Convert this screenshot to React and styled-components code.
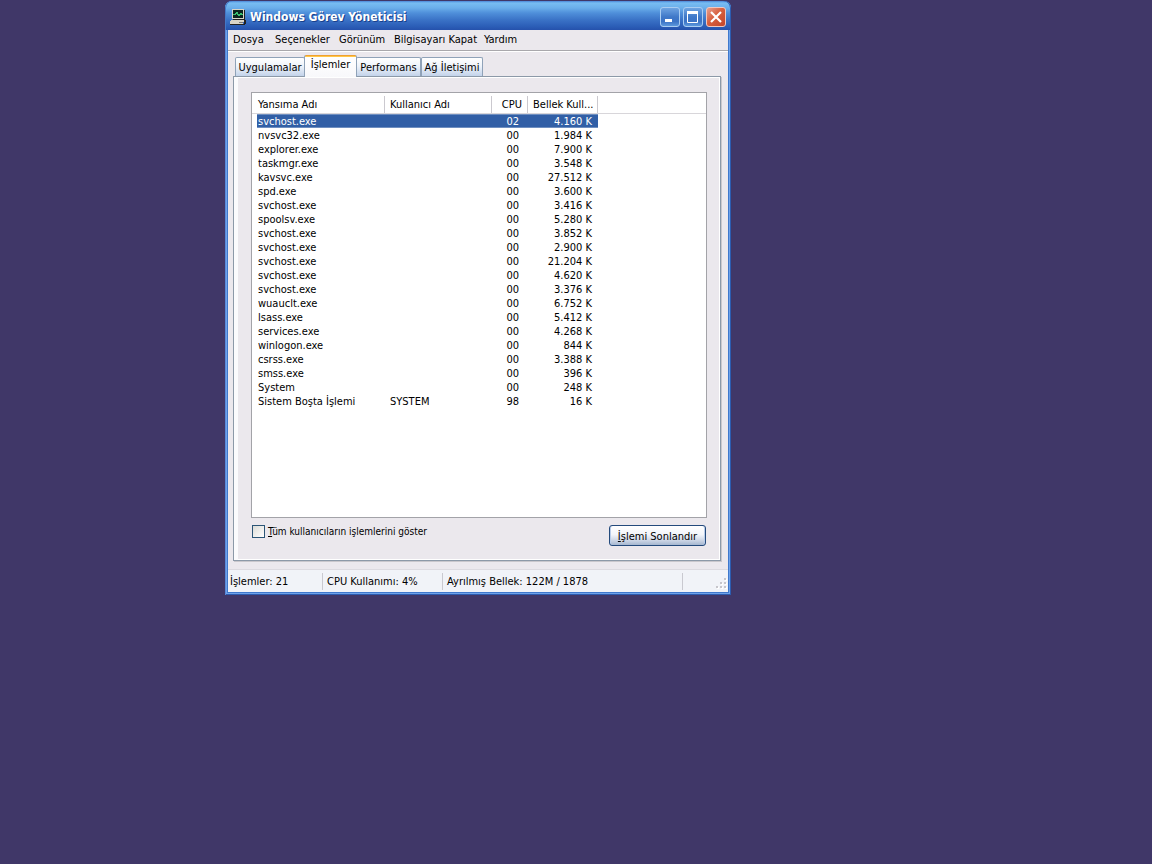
import React from "react";
import styled, { createGlobalStyle, css } from "styled-components";

const GlobalStyle = createGlobalStyle`
  * { box-sizing: border-box; }
  body {
    margin: 0;
    background: #403768;
    color: #000;
    font: 11px/14px "DejaVu Sans Condensed", sans-serif;
  }
  button, input { font: inherit; color: inherit; margin: 0; }
`;

const Desktop = styled.main`
  min-height: 100vh;
  padding: 1px 0 0 225px;
`;

const Window = styled.section`
  width: 100%;
  max-width: 506px;
  padding: 0 3px 3px;
  border-radius: 7px 7px 0 0;
  background: #3f78cc;
  box-shadow: inset 1px 0 #5a8ad8, inset -1px -1px #2c5cb0, inset 2px 0 #6ea2ea, inset -2px -2px #6ea2ea;
`;

const TitleBar = styled.header`
  display: flex;
  align-items: center;
  gap: 4px;
  height: 29px;
  margin: 0 -3px;
  padding: 2px 5px 0;
  border-radius: 7px 7px 0 0;
  background: linear-gradient(#4a86d8 0, #78bdf2 2px, #6aaeea 7px, #4f8fda 12px, #3a72c6 19px, #2c5fb8 25px, #2551ac 29px);
  box-shadow: inset 1px 0 #4478c6, inset -1px 0 #2c5cb0;
`;

const Title = styled.h1`
  flex: 1;
  margin: 0;
  color: #fff;
  font: bold 12px/16px "DejaVu Sans Condensed", sans-serif;
  text-shadow: 1px 1px #17408c;
`;

const Controls = styled.div`
  display: flex;
  gap: 3px;
`;

const ControlButton = styled.button`
  display: flex;
  width: 20px;
  height: 20px;
  padding: 0;
  border: 1px solid #a9cdf2;
  border-radius: 3px;
  background: ${({ $close }) =>
    $close
      ? "linear-gradient(135deg, #e6a090, #d8603f 45%, #c2452a)"
      : "linear-gradient(#6ea4e2, #3f78c8 50%, #3c74c6 75%, #5c98dc)"};
  ${({ $close }) => $close && css`border-color: #f0c8c0;`}
`;

const Client = styled.div`
  background: #ebe8ed;
`;

const MenuBar = styled.nav`
  display: flex;
  height: 21px;
  padding-left: 5px;
  border-bottom: 1px solid #a9a8ac;
  box-shadow: 0 1px #fff;
`;

const MenuItem = styled.button`
  width: ${({ $width }) => $width}px;
  padding: 0 0 1px;
  border: 0;
  background: none;
  text-align: left;
  white-space: nowrap;
`;

const Content = styled.div`
  padding: 4px 7px 8px 5px;
`;

const TabList = styled.div`
  display: flex;
  align-items: flex-end;
  height: 21px;
  padding-left: 2px;
`;

const Tab = styled.button`
  width: ${({ $width }) => $width}px;
  height: 19px;
  padding: 1px 0 0;
  border: 1px solid #8fa2b8;
  border-bottom: 0;
  border-radius: 2px 2px 0 0;
  background: linear-gradient(#fff, #eef3fa 45%, #c3d3ea);
  text-align: center;
  white-space: nowrap;
  ${({ $selected }) =>
    $selected &&
    css`
      position: relative;
      height: 22px;
      margin: 0 -1px -1px;
      padding: 0 0 2px;
      border-top: 0;
      background: linear-gradient(#f0a030 1px, #ffc848 1px 2px, #fff 2px, #f8f8fb);
    `}
`;

const Panel = styled.div`
  padding: 15px 13px 14px 17px;
  border: 1px solid #8c99a8;
  box-shadow: inset 4px 0 #fbfbfd, inset -1px -1px #fff, inset 0 1px #fff, 1px 1px #c9c7cc;
`;

const ListBox = styled.div`
  min-height: 426px;
  border: 1px solid #a3a3a8;
  background: #fff;
`;

const Table = styled.table`
  width: 100%;
  table-layout: fixed;
  border-collapse: separate;
  border-spacing: 0;
  line-height: 13px;
`;

const Column = styled.col`
  width: ${({ $width }) => ($width ? `${$width}px` : "auto")};
`;

const HeaderCell = styled.th`
  height: 21px;
  padding: 3px 6px 0;
  padding-left: ${({ $first }) => ($first ? 6 : 5)}px;
  border-bottom: 1px solid #d8d6da;
  background: linear-gradient(#cbc9cf, #cbc9cf) right 3px / 1px 17px no-repeat;
  font-weight: normal;
  text-align: ${({ $right }) => ($right ? "right" : "left")};
  white-space: nowrap;
  &:last-child { background: none; }
`;

const Row = styled.tr`
  ${({ $selected }) =>
    $selected &&
    css`
      color: #fff;
      td:not(:last-child) {
        background: #315fa6;
        background-clip: padding-box;
        box-shadow: inset 0 1px #6f8fc0, inset 0 -1px #6f8fc0;
      }
    `}
`;

const Cell = styled.td`
  height: 14px;
  padding: 1px ${({ $inset }) => $inset || 6}px 0 5px;
  text-align: ${({ $right }) => ($right ? "right" : "left")};
  white-space: nowrap;
  &:first-child {
    padding-left: 1px;
    border-left: 5px solid #fff;
  }
`;

const Actions = styled.div`
  display: flex;
  align-items: flex-start;
  justify-content: space-between;
  padding: 7px 1px 0;
`;

const CheckLabel = styled.label`
  display: flex;
  align-items: flex-start;
  gap: 3px;
  font-size: 10px;
`;

const Checkbox = styled.input`
  appearance: none;
  width: 13px;
  height: 13px;
  border: 1px solid #2b5576;
  background: linear-gradient(135deg, #dcdcd7, #fff);
`;

const PushButton = styled.button`
  width: 97px;
  height: 21px;
  padding: 2px 0 0;
  border: 1px solid #244a7c;
  border-radius: 3px;
  background: linear-gradient(#fff, #f3f5fa 45%, #cdd6e6 75%, #a6b7d0);
  box-shadow: inset 1px 0 #b9cdea, inset -1px 0 #b9cdea;
  white-space: nowrap;
`;

const StatusBar = styled.footer`
  display: grid;
  grid-template-columns: 95px 120px 240px 1fr;
  height: 23px;
  padding: 3px 0 2px;
  border-top: 1px solid #dcdae0;
  background: #f1f3f8;
`;

const StatusPart = styled.div`
  padding: 2px 0 0 ${({ $first }) => ($first ? 2 : 4)}px;
  border-right: 1px solid #c9c9d0;
  white-space: nowrap;
`;

const GripArea = styled.div`
  display: flex;
  align-items: flex-end;
  justify-content: flex-end;
`;

const menus = [
  ["Dosya", 42],
  ["Seçenekler", 64],
  ["Görünüm", 55],
  ["Bilgisayarı Kapat", 90],
  ["Yardım", 40],
];

const tabs = [
  ["Uygulamalar", 70],
  ["İşlemler", 53],
  ["Performans", 65],
  ["Ağ İletişimi", 62],
];

const processes = [
  ["svchost.exe", "", "02", "4.160 K"],
  ["nvsvc32.exe", "", "00", "1.984 K"],
  ["explorer.exe", "", "00", "7.900 K"],
  ["taskmgr.exe", "", "00", "3.548 K"],
  ["kavsvc.exe", "", "00", "27.512 K"],
  ["spd.exe", "", "00", "3.600 K"],
  ["svchost.exe", "", "00", "3.416 K"],
  ["spoolsv.exe", "", "00", "5.280 K"],
  ["svchost.exe", "", "00", "3.852 K"],
  ["svchost.exe", "", "00", "2.900 K"],
  ["svchost.exe", "", "00", "21.204 K"],
  ["svchost.exe", "", "00", "4.620 K"],
  ["svchost.exe", "", "00", "3.376 K"],
  ["wuauclt.exe", "", "00", "6.752 K"],
  ["lsass.exe", "", "00", "5.412 K"],
  ["services.exe", "", "00", "4.268 K"],
  ["winlogon.exe", "", "00", "844 K"],
  ["csrss.exe", "", "00", "3.388 K"],
  ["smss.exe", "", "00", "396 K"],
  ["System", "", "00", "248 K"],
  ["Sistem Boşta İşlemi", "SYSTEM", "98", "16 K"],
];

function AppIcon() {
  return (
    <svg width="16" height="16" viewBox="0 0 16 16" aria-hidden="true" shapeRendering="crispEdges">
      <path d="M2 0h12v10H2z" fill="#d8d5c8" />
      <path d="M14 1h1v10H3v-1h11z" fill="#222" />
      <path d="M3 1h10v8H3z" fill="#0b2420" />
      <path d="M3 5h2v-1h1v-1h1v2h1v1h1v-1h1v-1h1v1h2" fill="none" stroke="#39c070" strokeWidth="1" />
      <path d="M1 11h13l-1 4H0v-3z" fill="#d8d5c8" />
      <path d="M0 15h14v-4h2v3l-1 2H0z" fill="#222" />
      <path d="M9 13h4v1H9z" fill="#777" />
    </svg>
  );
}

function ControlGlyph({ kind }) {
  return (
    <svg width="18" height="18" viewBox="0 0 18 18" fill="none" stroke="#fff" aria-hidden="true">
      {kind === "min" && <path d="M4 12.5h7" strokeWidth="3" />}
      {kind === "max" && (
        <>
          <path d="M3.5 4v10.5h10V4" />
          <path d="M3 4.500h11" strokeWidth="3" />
        </>
      )}
      {kind === "close" && <path d="M4 4l10 10M14 4L4 14" strokeWidth="2.200" />}
    </svg>
  );
}

function Grip() {
  const dots = [[8, 0], [4, 4], [8, 4], [0, 8], [4, 8], [8, 8]];
  return (
    <svg width="12" height="12" viewBox="0 0 12 12" aria-hidden="true" shapeRendering="crispEdges">
      {dots.map(([x, y]) => (
        <g key={`${x}-${y}`}>
          <rect x={x + 1} y={y + 1} width="2" height="2" fill="#fff" />
          <rect x={x} y={y} width="2" height="2" fill="#c6c5cb" />
        </g>
      ))}
    </svg>
  );
}

export default function App() {
  return (
    <>
      <GlobalStyle />
      <Desktop>
        <Window>
          <TitleBar>
            <AppIcon />
            <Title>Windows Görev Yöneticisi</Title>
            <Controls>
              <ControlButton aria-label="Simge durumuna küçült"><ControlGlyph kind="min" /></ControlButton>
              <ControlButton aria-label="Ekranı kapla"><ControlGlyph kind="max" /></ControlButton>
              <ControlButton $close aria-label="Kapat"><ControlGlyph kind="close" /></ControlButton>
            </Controls>
          </TitleBar>
          <Client>
            <MenuBar>
              {menus.map(([name, width]) => (
                <MenuItem key={name} $width={width}>{name}</MenuItem>
              ))}
            </MenuBar>
            <Content>
              <TabList role="tablist">
                {tabs.map(([name, width], i) => (
                  <Tab key={name} role="tab" aria-selected={i === 1} $selected={i === 1} $width={width}>
                    {name}
                  </Tab>
                ))}
              </TabList>
              <Panel role="tabpanel">
                <ListBox>
                  <Table>
                    <colgroup>
                      <Column $width={133} />
                      <Column $width={107} />
                      <Column $width={36} />
                      <Column $width={70} />
                      <Column />
                    </colgroup>
                    <thead>
                      <tr>
                        <HeaderCell $first>Yansıma Adı</HeaderCell>
                        <HeaderCell>Kullanıcı Adı</HeaderCell>
                        <HeaderCell $right>CPU</HeaderCell>
                        <HeaderCell $right>Bellek Kull...</HeaderCell>
                        <HeaderCell aria-hidden="true" />
                      </tr>
                    </thead>
                    <tbody>
                      {processes.map(([name, user, cpu, memory], i) => (
                        <Row key={i} $selected={i === 0}>
                          <Cell>{name}</Cell>
                          <Cell>{user}</Cell>
                          <Cell $right $inset={9}>{cpu}</Cell>
                          <Cell $right>{memory}</Cell>
                          <Cell />
                        </Row>
                      ))}
                    </tbody>
                  </Table>
                </ListBox>
                <Actions>
                  <CheckLabel>
                    <Checkbox type="checkbox" />
                    <span><u>T</u>üm kullanıcıların işlemlerini göster</span>
                  </CheckLabel>
                  <PushButton><u>İ</u>şlemi Sonlandır</PushButton>
                </Actions>
              </Panel>
            </Content>
            <StatusBar>
              <StatusPart $first>İşlemler: 21</StatusPart>
              <StatusPart>CPU Kullanımı: 4%</StatusPart>
              <StatusPart>Ayrılmış Bellek: 122M / 1878</StatusPart>
              <GripArea><Grip /></GripArea>
            </StatusBar>
          </Client>
        </Window>
      </Desktop>
    </>
  );
}
